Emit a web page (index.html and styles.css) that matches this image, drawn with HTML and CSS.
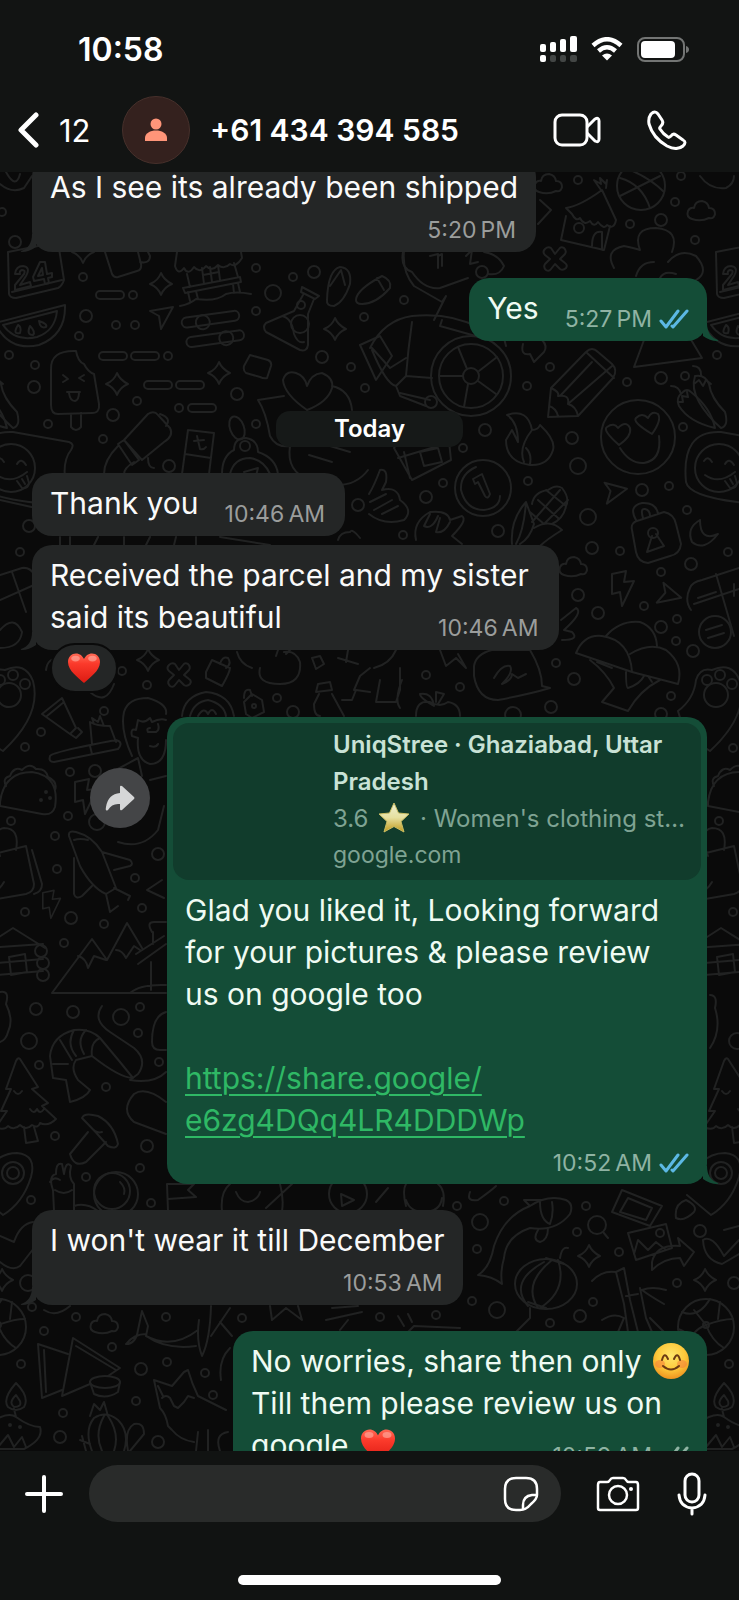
FILE: index.html
```html
<!DOCTYPE html>
<html lang="en">
<head>
<meta charset="utf-8">
<meta name="viewport" content="width=device-width, initial-scale=1">
<title>Chat</title>
<link rel="stylesheet" href="styles.css">
</head>
<body>
<svg class="defs" aria-hidden="true">
  <defs>
    <linearGradient id="heartFill" x1="0" y1="0" x2="0" y2="1"><stop offset="0" stop-color="#ff6a55"/><stop offset=".35" stop-color="#fb3a2b"/><stop offset="1" stop-color="#dc1a12"/></linearGradient>
    <linearGradient id="starFill" x1="0" y1="0" x2="0" y2="1"><stop offset="0" stop-color="#eef0d4"/><stop offset=".5" stop-color="#e6e0a0"/><stop offset="1" stop-color="#c19a1c"/></linearGradient>
    <radialGradient id="smileFill" cx=".5" cy=".35" r=".65"><stop offset="0" stop-color="#ffe66b"/><stop offset=".6" stop-color="#fdc93a"/><stop offset="1" stop-color="#ee9420"/></radialGradient>
    <symbol id="heart" viewBox="0 0 36 34"><path d="M18 33C12 27 1 20 1 10.500C1 5 5 1.500 9.500 1.500C13.500 1.500 16.500 4 18 7.500C19.500 4 22.500 1.500 26.500 1.500C31 1.500 35 5 35 10.500C35 20 24 27 18 33Z" fill="url(#heartFill)"/><ellipse cx="9" cy="7" rx="4.500" ry="3" fill="#ffb3a6" opacity=".6"/><ellipse cx="27" cy="7" rx="4.500" ry="3" fill="#ffb3a6" opacity=".6"/></symbol>
    <symbol id="ticks" viewBox="0 0 30 20"><path d="M2 12L7 18L19 2M13 17L14 18L28 2" fill="none" stroke="currentColor" stroke-width="3" stroke-linecap="round" stroke-linejoin="round"/></symbol>
    <symbol id="tail" viewBox="0 0 16 18"><path d="M0 0H4C4 9 8 15 15 17Q16 18 14 18Q7 18 0 13Z" fill="currentColor"/></symbol>

    <circle id="s" r="4"/><circle id="m" r="6"/><circle id="l" r="8"/>
    <path id="spark" d="M0 -11Q3 -4 11 0Q3 3 0 11Q-3 3 -11 0Q-3 -3 0 -11Z"/>
    <rect id="pill" x="-14" y="-4" width="28" height="8" rx="4"/>
    <path id="cross" d="M-4 -11Q-7 -13 -10 -10Q-13 -7 -10 -4L-5 0L-10 5Q-12 8 -9 11Q-6 13 -4 10L0 5L5 10Q8 12 11 9Q13 6 10 4L5 0L10 -5Q12 -8 9 -11Q6 -13 4 -10L0 -5Z"/>
    <path id="cursor" d="M-12 -8L11 -12L-1 10L-3 -3Z"/>
    <path id="cloud" d="M-9 8Q-15 6 -13 0Q-11 -4 -7 -3Q-6 -10 1 -10Q7 -9 8 -3Q14 -3 14 3Q13 8 8 7Q0 11 -9 8Z"/>
    <path id="bolt" d="M-9 -14L5 -17L3 -6L13 -7L1 18L-1 4L-9 6Z"/>
    <g id="melon"><path d="M-36 2L34 -16Q35 14 8 24Q-22 31 -36 2ZM-28 4L26 -10Q24 10 6 16Q-16 21 -28 4"/><path d="M-13 4Q-9 6 -11 12Q-19 14 -13 4ZM-1 5Q5 11 2 14Q-5 14 -1 5ZM8 0Q17 3 15 6Q9 8 8 0Z"/></g>
    <g id="tongue"><circle r="24"/><path d="M-15 -7Q-11 -13 -7 -6M6 -4Q10 -11 15 -3M-14 7Q0 17 16 4M6 13L11 20Q17 21 18 15L16 8M11 11L14 16"/><path d="M-33 14Q-38 -38 2 -36L58 -26Q64 -24 60 -18Q52 -8 54 10Q50 38 18 34Q-30 28 -33 14Z"/></g>
    <g id="paw"><circle r="12"/><circle cx="-9" cy="-15" r="5"/><circle cx="4" cy="-20" r="5"/><circle cx="16" cy="-11" r="5"/><path d="M-38 16Q-22 4 -20 -15Q-16 -28 -4 -25Q16 -34 24 -14Q33 20 -6 56Q-32 40 -38 16"/></g>
    <g id="chili"><path d="M-10 -10Q-18 -4 -14 4Q-4 20 22 26Q18 6 -2 -10Q-6 -14 -10 -10ZM-12 -8Q-14 -16 -22 -16M-15 0L-10 0L-11 -6L-5 -5L-6 -10"/><path d="M2 -26Q-2 -14 6 0Q14 14 28 26Q36 24 32 10Q18 -4 16 -18Q12 -28 2 -26ZM8 -27Q8 -36 0 -36M1 -18L6 -22L10 -16L13 -22L18 -18"/></g>
    <g id="calendar"><path d="M-26 -34L24 -44L30 -6Q28 0 24 2L-18 12Q-24 12 -25 8ZM-22 6L28 -6"/><path d="M-19 -12Q-18 -20 -11 -20Q-3 -19 -8 -10L-14 -1L-4 -4L-3 0L-19 4L-19 -1L-10 -12Q-8 -16 -12 -16Q-15 -15 -14 -12ZM6 -24L11 -24L13 -12L18 -13L18 -9L14 -8L15 -3L11 -2L10 -7L0 -5L-1 -9ZM8 -18L4 -10L9 -11Z"/></g>
    <g id="taco"><path d="M-28 12Q-24 -18 4 -18Q32 -14 27 17Q24 26 14 24L-28 16ZM-22 -4Q-26 -12 -18 -14Q-14 -24 -6 -20Q2 -28 8 -21Q18 -22 20 -13Q30 -8 27 0"/><circle cx="18" cy="2" r="1"/><circle cx="22" cy="8" r="1"/><circle cx="13" cy="10" r="1"/></g>
    <g id="cabin"><path d="M-30 -8L-2 -26L30 -6M-28 -6L28 -10M-30 10L28 5M-30 22L28 17M-6 3L10 0L12 18L-4 21Z"/><circle cx="26" cy="-3" r="6"/><circle cx="28" cy="9" r="6"/><circle cx="28" cy="21" r="6"/><circle cx="-28" cy="2" r="6"/><circle cx="-27" cy="13" r="6"/></g>
    <g id="pine"><path d="M0 -38Q-2 -40 -4 -36L-14 -8L-9 -8L-19 14L-13 14L-24 30Q-16 34 -12 29Q-6 34 0 28Q6 34 12 28Q18 32 20 26Q28 30 36 22L22 9L28 6L12 -8L18 -10ZM4 30L6 46L18 44L14 30M-6 -6Q-2 0 2 -6M10 12Q14 18 17 12Q20 18 24 12"/></g>
    <g id="pin"><circle r="6"/><circle r="11"/><path d="M-20 -10Q-10 -20 4 -20Q24 -18 18 4Q10 30 -10 42L-34 22"/></g>
    <g id="beach"><circle r="28"/><path d="M-24 -15Q-8 -8 4 -28M-18 22Q-16 4 0 -2Q16 -8 27 -8M0 -2L-12 -17M0 -2Q6 14 18 21M-28 2Q-14 6 -12 25M12 -8L14 -25"/><circle cx="0" cy="-2" r="3"/></g>
    <g id="lamp"><path d="M0 -44Q-14 -28 -8 -20Q0 -14 8 -20Q14 -30 0 -44ZM0 -32Q-8 -24 -2 -20Q6 -20 4 -26ZM-26 -4Q-8 -16 0 -10Q14 0 24 0Q28 12 8 22L-26 22M-2 -18L0 -10M-18 20L-8 8L-2 20L6 10L10 20"/><circle cx="4" cy="0" r="1"/><circle cx="-6" cy="-2" r="1"/></g>
    <g id="basket"><path d="M-30 -10L18 -22L26 16Q26 24 18 26L-28 34M24 -18L34 16Q34 24 26 26M-30 -14L-24 -24M-8 -12Q-18 -38 -4 -40Q12 -40 8 -18M-24 22Q-12 28 -4 14"/></g>
  </defs>
</svg>

<main class="phone">
  <div class="status-bar">
    <time class="clock">10:58</time>
    <div class="status-icons">
      <svg width="37" height="26" viewBox="0 0 37 26" aria-label="Signal" role="img"><g fill="#fff"><rect x="0" y="8" width="6" height="8" rx="2"/><rect x="10" y="6" width="6" height="10" rx="2"/><rect x="20" y="3" width="6" height="13" rx="2"/><rect x="30" y="0" width="7" height="16" rx="2"/><rect x="0" y="19" width="6" height="7" rx="2"/></g><g fill="#434645"><rect x="10" y="19" width="6" height="7" rx="2"/><rect x="20" y="19" width="6" height="7" rx="2"/><rect x="30" y="19" width="7" height="7" rx="2"/></g></svg>
      <svg width="32" height="24" viewBox="0 0 32 24" aria-label="Wi-Fi" role="img"><path d="M2 8.500Q16 -4 30 8.500" fill="none" stroke="#fff" stroke-width="4.500"/><path d="M7.500 14Q16 6.500 24.500 14" fill="none" stroke="#fff" stroke-width="4.500"/><path d="M11 18.500Q16 14.500 21 18.500L16 23.500Z" fill="#fff"/></svg>
      <svg width="52" height="25" viewBox="0 0 52 25" aria-label="Battery" role="img"><rect x="1" y="1" width="46" height="23" rx="7" fill="none" stroke="#737574" stroke-width="2"/><rect x="4" y="4" width="34" height="17" rx="4" fill="#fff"/><path d="M49 9Q52 10 52 12.500Q52 15 49 16Z" fill="#737574"/></svg>
    </div>
  </div>

  <header class="nav-bar">
    <button class="back" type="button" aria-label="Back, 12 unread chats">
      <svg width="21" height="38" viewBox="0 0 21 38"><path d="M18 4L3 19L18 34" fill="none" stroke="#fff" stroke-width="5" stroke-linecap="round" stroke-linejoin="round"/></svg>
      <span>12</span>
    </button>
    <span class="avatar"><svg width="22" height="24" viewBox="0 0 22 24"><circle cx="11" cy="6" r="5.500" fill="#ff9579"/><path d="M0 23V20C0 10 22 10 22 20V23Z" fill="#ff9579"/></svg></span>
    <h1 class="contact">+61 434 394 585</h1>
    <button class="icon-button" type="button" aria-label="Video call"><svg width="48" height="34" viewBox="0 0 48 34" fill="none" stroke="#fff" stroke-width="3" stroke-linejoin="round"><rect x="2" y="2" width="32" height="30" rx="7"/><path d="M34 14L42 6Q46 4 46 8V26Q46 30 42 28L34 20"/></svg></button>
    <button class="icon-button" type="button" aria-label="Voice call"><svg width="40" height="40" viewBox="0 0 40 40"><path d="M4 4Q8 0 11 4L15 10Q17 13 14 16Q12 18 13 19Q16 24 21 27Q22 28 24 26Q26 23 29 25L36 30Q40 32 36 36Q30 41 20 36Q6 28 2 14Q1 8 4 4Z" fill="none" stroke="#fff" stroke-width="3" stroke-linejoin="round"/></svg></button>
  </header>

  <section class="chat" aria-label="Messages">
    <svg class="wallpaper" aria-hidden="true">
      <g transform="translate(0 -172)">
        <!-- dots -->
        <use href="#s" x="2" y="212"/><use href="#m" x="15" y="242"/><use href="#s" x="578" y="180"/><use href="#s" x="681" y="176"/><use href="#s" x="675" y="202"/><use href="#m" x="661" y="220"/><use href="#s" x="630" y="224"/><use href="#s" x="695" y="240"/>
        <use href="#s" x="83" y="277"/><use href="#s" x="133" y="295"/><use href="#m" x="86" y="316"/><use href="#s" x="79" y="336"/><use href="#s" x="116" y="325"/><use href="#s" x="135" y="325"/><use href="#s" x="168" y="356"/><use href="#s" x="9" y="355"/><use href="#s" x="35" y="365"/><use href="#m" x="34" y="387"/><use href="#s" x="137" y="401"/><use href="#m" x="113" y="415"/><use href="#s" x="48" y="424"/><use href="#s" x="103" y="439"/><use href="#s" x="179" y="408"/><use href="#m" x="237" y="394"/><use href="#s" x="256" y="424"/><use href="#m" x="169" y="466"/><use href="#s" x="256" y="268"/><use href="#l" x="273" y="293"/><use href="#s" x="293" y="277"/><use href="#m" x="314" y="272"/><use href="#s" x="256" y="311"/><use href="#m" x="322" y="357"/><use href="#s" x="351" y="367"/><use href="#s" x="364" y="317"/><use href="#s" x="365" y="388"/>
        <use href="#s" x="404" y="300"/><use href="#s" x="550" y="367"/><use href="#s" x="527" y="386"/><use href="#s" x="627" y="382"/><use href="#m" x="661" y="378"/><use href="#s" x="685" y="376"/><use href="#s" x="717" y="355"/><use href="#m" x="485" y="430"/><use href="#m" x="572" y="438"/><use href="#s" x="683" y="427"/><use href="#s" x="463" y="448"/><use href="#l" x="578" y="466"/><use href="#s" x="528" y="481"/><use href="#m" x="642" y="490"/><use href="#s" x="669" y="486"/><use href="#s" x="443" y="483"/><use href="#m" x="426" y="497"/><use href="#l" x="588" y="517"/><use href="#m" x="498" y="531"/><use href="#s" x="403" y="535"/><use href="#m" x="592" y="548"/><use href="#s" x="620" y="551"/><use href="#s" x="687" y="510"/><use href="#s" x="728" y="552"/><use href="#m" x="29" y="526"/><use href="#s" x="20" y="552"/><use href="#m" x="358" y="505"/>
        <use href="#m" x="691" y="564"/><use href="#s" x="661" y="572"/><use href="#m" x="578" y="595"/><use href="#m" x="598" y="613"/><use href="#s" x="644" y="606"/><use href="#s" x="677" y="619"/><use href="#m" x="661" y="627"/><use href="#s" x="676" y="641"/><use href="#m" x="693" y="651"/><use href="#s" x="556" y="663"/><use href="#m" x="574" y="679"/><use href="#s" x="671" y="696"/><use href="#s" x="733" y="748"/><use href="#s" x="426" y="675"/><use href="#s" x="460" y="687"/><use href="#m" x="551" y="707"/><use href="#l" x="513" y="715"/><use href="#m" x="661" y="714"/>
        <use href="#s" x="122" y="671"/><use href="#s" x="147" y="685"/><use href="#s" x="104" y="711"/><use href="#s" x="41" y="732"/><use href="#s" x="25" y="747"/><use href="#s" x="70" y="772"/><use href="#m" x="95" y="771"/><use href="#s" x="68" y="816"/><use href="#l" x="97" y="822"/><use href="#s" x="11" y="821"/><use href="#s" x="55" y="836"/><use href="#s" x="57" y="869"/><use href="#m" x="158" y="854"/><use href="#s" x="135" y="878"/><use href="#s" x="277" y="698"/><use href="#m" x="293" y="712"/>
        <use href="#s" x="25" y="912"/><use href="#m" x="71" y="918"/><use href="#s" x="104" y="924"/><use href="#s" x="142" y="908"/><use href="#s" x="64" y="943"/><use href="#m" x="36" y="1009"/><use href="#m" x="73" y="1012"/><use href="#l" x="121" y="1017"/><use href="#s" x="140" y="1007"/><use href="#l" x="29" y="1041"/><use href="#s" x="138" y="1033"/><use href="#s" x="39" y="1065"/><use href="#s" x="106" y="1087"/><use href="#s" x="159" y="1062"/><use href="#s" x="55" y="1136"/><use href="#m" x="147" y="1146"/><use href="#s" x="140" y="1168"/><use href="#s" x="86" y="1177"/><use href="#s" x="31" y="1200"/><use href="#s" x="151" y="1203"/><use href="#s" x="719" y="821"/><use href="#s" x="733" y="912"/><use href="#l" x="737" y="1041"/>
        <use href="#s" x="457" y="1206"/><use href="#s" x="504" y="1201"/><use href="#s" x="586" y="1206"/><use href="#l" x="480" y="1222"/><use href="#s" x="577" y="1232"/><use href="#s" x="477" y="1249"/><use href="#m" x="700" y="1231"/><use href="#s" x="619" y="1252"/><use href="#s" x="677" y="1283"/><use href="#s" x="472" y="1301"/><use href="#l" x="497" y="1310"/><use href="#m" x="580" y="1316"/><use href="#s" x="550" y="1323"/><use href="#s" x="593" y="1302"/><use href="#s" x="436" y="1315"/><use href="#s" x="380" y="1317"/><use href="#s" x="729" y="1364"/><use href="#m" x="734" y="1283"/>
        <use href="#s" x="76" y="1317"/><use href="#s" x="44" y="1331"/><use href="#s" x="32" y="1307"/><use href="#s" x="166" y="1317"/><use href="#s" x="242" y="1318"/><use href="#s" x="112" y="1347"/><use href="#s" x="21" y="1364"/><use href="#m" x="141" y="1369"/><use href="#s" x="167" y="1362"/><use href="#s" x="205" y="1373"/><use href="#s" x="136" y="1401"/><use href="#s" x="213" y="1395"/><use href="#s" x="63" y="1413"/><use href="#m" x="60" y="1437"/><use href="#m" x="158" y="1442"/><use href="#l" x="28" y="1283"/>
        <!-- small shapes -->
        <use href="#spark" x="161" y="284"/><use href="#spark" x="335" y="329"/><use href="#spark" x="117" y="384"/><use href="#spark" x="219" y="373"/><use href="#spark" x="148" y="660"/><use href="#spark" x="589" y="1256"/><use href="#spark" x="705" y="1280"/><use href="#spark" x="2" y="1280"/><use href="#spark" x="83" y="252"/>
        <use href="#pill" x="110" y="295"/><use href="#pill" x="113" y="356"/><use href="#pill" x="145" y="356"/><use href="#pill" x="158" y="385"/><use href="#pill" x="190" y="385"/><use href="#pill" x="202" y="408"/>
        <use href="#cross" x="555" y="259"/><use href="#cross" x="179" y="675"/><use href="#cloud" x="701" y="211"/><use href="#cloud" x="104" y="1324"/><use href="#cloud" x="573" y="567"/><use href="#cloud" x="548" y="184"/>
        <use href="#cursor" x="162" y="319"/><use href="#cursor" transform="translate(612 495) rotate(25)"/><use href="#cursor" transform="translate(665 597) rotate(50)"/>
        <use href="#bolt" x="621" y="588"/><use href="#bolt" x="84" y="796"/><use href="#bolt" transform="translate(50 904) scale(.8)"/>
        <!-- doodles cut by both edges -->
        <use href="#calendar" x="34" y="286"/><use href="#calendar" x="742" y="286"/><use href="#melon" x="31" y="321"/><use href="#melon" x="739" y="321"/>
        <use href="#tongue" x="11" y="468"/><use href="#tongue" x="719" y="468"/><use href="#chili" x="693" y="402"/><use href="#chili" x="-15" y="402"/><use href="#paw" x="9" y="695"/><use href="#paw" x="716" y="695"/>
        <use href="#taco" x="28" y="790"/><use href="#taco" x="736" y="790"/><use href="#basket" x="8" y="868"/><use href="#basket" x="716" y="868"/><use href="#cabin" x="15" y="954"/><use href="#cabin" x="723" y="954"/><use href="#pine" x="20" y="1097"/><use href="#pine" x="728" y="1097"/><use href="#pin" x="13" y="1173"/><use href="#pin" x="721" y="1173"/><use href="#beach" x="-2" y="1327"/><use href="#beach" x="706" y="1327"/><use href="#lamp" x="16" y="1427"/><use href="#lamp" x="724" y="1427"/>
        <path d="M0 575L22 568Q30 567 34 574V640M0 600L34 585M12 572L26 612M0 630Q14 614 22 632Q20 648 0 648M0 500L36 508M0 992Q10 990 6 1004Q14 1020 8 1032Q6 1040 0 1042"/>
        <path d="M691 610Q684 600 690 588Q692 582 702 580L739 568M694 604L739 589M716 574L734 636M698 598L716 592M734 584V596"/><circle cx="715" cy="632" r="16"/><path d="M706 630L722 625M708 638L724 633M710 995Q718 995 715 1008Q722 1030 710 1048"/>
        <!-- jug, stall, flask, sandals -->
        <path d="M105 252L112 274Q114 278 118 277L137 271Q142 270 141 264L137 248M140 262Q150 264 150 256L146 248"/>
        <path d="M177 252L175 266Q178 276 184 268Q188 276 194 267Q200 274 206 266Q212 272 218 265Q224 270 230 264Q236 268 242 258L240 246M183 288L240 277L241 282L185 293ZM187 274L190 287M234 263L238 277M202 268L204 284M210 267L212 282M218 265L220 280M203 275L219 272M188 292L190 301M196 291L198 299M233 284L234 293M238 283L240 292M180 306Q190 304 196 299Q216 302 226 294Q236 291 251 294"/>
        <g transform="rotate(-8 212 323)"><rect x="182" y="314" width="58" height="10" rx="5"/><rect x="184" y="334" width="58" height="10" rx="5"/><circle cx="203" cy="321" r="7"/><circle cx="224" cy="340" r="7"/></g>
        <path d="M302 287L319 296L315 299L301 292ZM303 295L294 311L266 323Q262 327 266 332L300 350Q307 352 308 345L308 314L314 299M282 316Q292 318 294 334Q298 344 304 342"/><circle cx="300" cy="324" r="9"/><circle cx="301" cy="305" r="4"/>
        <path d="M327 300Q328 270 340 267Q352 268 350 284Q344 302 334 306Q326 306 327 300ZM330 286L341 270L345 285M356 300Q356 290 382 276Q392 280 390 288Q376 304 362 304Q356 304 356 300M377 278L384 290"/>
        <path d="M244 366L250 355L268 360Q272 362 271 366L267 378Q264 379 260 377L246 373Q243 371 244 366Z"/>
        <path d="M307 410Q284 394 283 380Q286 370 296 373Q305 376 307 386Q311 374 322 373Q334 378 332 388Q328 402 307 410ZM332 386Q350 390 352 410M284 396L258 400Q266 412 270 436Q276 448 290 446Q286 472 310 480Q350 494 368 470M309 455L332 462M330 446L350 452"/>
        <!-- ice pop -->
        <path d="M51 370Q50 350 76 351Q78 362 84 364Q88 372 94 374L99 404Q100 413 92 413L58 414Q51 414 51 405ZM71 414V427Q76 433 81 427V413M63 375L68 379L63 382M84 375L79 378L84 381M67 392H80M69 393Q70 401 75 401Q79 400 79 392"/>
        <path d="M124 440L148 414Q154 410 158 415L170 428Q174 436 164 442L142 460ZM118 444L124 440L139 460L132 465ZM118 446Q104 460 104 474M134 462Q124 468 124 474M160 414Q172 418 166 426M148 458Q148 468 154 468M188 430L214 433L209 474M188 430L182 474M185 454L211 458M197 436L200 449Q204 450 206 447M194 441L204 440"/>
        <ellipse cx="237" cy="428" rx="7" ry="12" transform="rotate(-20 237 428)"/><circle cx="245" cy="446" r="5"/><path d="M222 474Q222 456 234 450Q234 438 246 438Q258 440 258 452Q276 458 278 474M230 474Q234 458 250 458Q264 460 270 474M244 472L258 468L256 476"/>
        <path d="M360 345L380 336L392 356L376 380ZM404 251Q402 272 414 286L442 302L446 296L434 320"/>
        <!-- auto rickshaw -->
        <circle cx="471" cy="376" r="40"/><circle cx="471" cy="376" r="32"/><circle cx="471" cy="376" r="8"/><path d="M463 376H440M467 369L458 347M479 371L497 357M478 381L496 394M468 384L464 407M370 348Q384 320 412 316Q450 312 480 328L504 338L506 346M442 320L440 326L490 340M372 350Q386 384 396 386L406 376L432 378M412 322Q408 350 406 376M372 348L390 368L406 358M400 393L430 400M396 386L400 396L426 406"/><circle cx="431" cy="402" r="6"/>
        <path d="M403 252Q400 268 412 272Q424 290 440 288L468 278M430 256L438 254V268M438 256L442 254V266M466 256L472 250L470 264L478 262M484 252Q498 254 504 266Q500 276 488 274"/><circle cx="482" cy="272" r="6"/>
        <!-- hut, ball, tree -->
        <path d="M566 208Q580 206 602 190L616 220Q614 230 607 225Q604 230 598 222Q594 228 590 221Q584 226 580 218Q576 222 572 214ZM566 216L561 240L604 250L610 226M592 246Q592 230 602 232V250M601 190L594 180L601 184L600 178L606 184L607 180L606 188"/><circle cx="579" cy="228" r="5"/>
        <circle cx="641" cy="186" r="24"/><path d="M620 178Q642 184 650 208M620 196L660 176M630 170Q650 178 664 192"/>
        <path d="M614 268Q604 250 624 246Q634 248 640 250Q632 228 656 228Q680 230 672 252M668 262Q680 248 696 256Q710 272 696 280M636 276Q640 262 654 262M660 278Q664 270 676 274"/>
        <path d="M700 176Q710 190 726 188Q734 184 734 176M540 200L551 210L538 224M0 184Q12 194 24 188L32 176M6 172Q16 190 20 174"/>
        <path d="M523 344Q520 356 530 354L534 362L544 352Q548 346 542 340M644 340L634 367L702 358L690 338"/>
        <!-- pencil, faces, fire -->
        <path d="M551 388L586 352Q592 346 598 352L612 364Q618 370 613 378L578 416L548 417ZM551 388Q560 392 558 396Q570 394 568 404Q576 406 578 416M560 396L592 362M568 404L612 366M586 352L614 378M549 406Q556 408 558 416"/>
        <circle cx="638" cy="437" r="37"/><path d="M620 448Q630 464 644 463Q662 460 659 436M619 445Q602 430 607 427Q614 422 618 428Q626 420 630 428Q632 436 619 445ZM652 434Q632 422 636 418Q642 412 648 418Q652 410 658 414Q662 420 652 434Z"/>
        <path d="M507 415Q528 408 532 430Q538 430 540 425Q556 440 553 450Q548 466 530 465Q506 462 506 440L512 430L518 442Q518 422 507 415ZM532 430Q518 448 524 462M526 448Q532 454 530 464"/>
        <circle cx="483" cy="488" r="28"/><path d="M476 467Q460 474 461 490Q466 510 484 510Q500 508 500 496M473 479L482 474L490 494Q488 500 485 496L478 482L475 484Z"/>
        <path d="M394 448L400 440L448 432L451 460L412 480ZM398 458L438 446M404 452L410 478M420 452L438 448L442 462L424 466Z"/>
        <path d="M369 494Q374 486 380 470Q388 468 386 482L382 490Q398 486 400 500Q414 510 404 520Q384 526 369 514M370 502L386 494M374 510L392 500M382 514L398 506"/>
        <path d="M416 540Q412 522 430 512Q448 510 450 520L462 516Q468 520 452 536L462 544M430 514L424 526Q432 530 438 516M440 518L436 532Q444 534 450 522"/>
        <!-- corn, padlock, moon -->
        <path d="M512 544Q510 520 526 502L534 524Q530 538 520 544M526 502Q524 530 516 544M534 528Q550 518 562 530Q546 540 540 546M532 504Q534 492 548 490Q556 484 562 488Q570 498 566 506Q564 518 552 524M530 512L544 524M538 500L558 518M546 490L566 506M532 522L560 490M544 524L568 500"/>
        <path d="M632 530Q630 522 640 520L664 512Q674 514 676 524L681 544Q680 554 670 556L648 563Q638 562 636 552ZM636 520Q628 506 642 503Q656 502 658 514M643 518Q640 508 645 509Q650 510 650 516M652 536L647 552L664 546L656 534"/><circle cx="653" cy="533" r="5"/><path d="M700 520Q686 528 692 542Q704 552 718 534Q700 542 700 520"/>
        <path d="M60 537V545M70 537V545M98 537L94 545M124 537V545M150 537L146 545M176 537L174 545M196 537V545M220 537L270 545M338 540Q340 532 350 532Q352 528 360 538"/>
        <!-- umbrella mushrooms, apple -->
        <path d="M576 653Q584 634 602 636Q630 640 632 672ZM606 636Q620 620 640 622Q656 628 657 646M630 654Q650 642 666 650Q684 664 678 684L632 672M590 660Q606 672 614 688L602 702L628 711Q640 690 660 680M626 672Q626 688 628 688Q640 684 644 676M597 662L612 668M648 676L652 682"/>
        <path d="M474 666Q476 654 492 650L530 650Q542 670 542 686L550 688Q530 694 498 700Q478 700 474 676ZM494 678Q502 664 510 666Q514 672 502 684Q512 680 512 674L518 678L526 674"/>
        <path d="M416 716Q416 700 430 702Q440 708 448 702Q460 704 460 716M434 706Q420 698 420 694Q432 692 434 706ZM436 702L436 692L444 694L438 704M440 650L446 666L456 658L466 668L458 654M396 650Q390 664 374 668M380 680L376 702L396 702L400 690V668M402 680Q394 700 400 708"/>
        <path d="M561 620L576 608Q584 612 564 630L572 632Q580 640 562 640"/>
        <!-- duck, bags, toothpaste -->
        <path d="M46 670Q48 656 60 660M90 692Q106 706 114 684M237 652Q240 664 252 668M260 668Q256 684 280 684Q302 684 300 662Q296 650 284 652M276 656L278 650M286 654L290 650"/>
        <path d="M206 672L212 660L230 668Q230 672 222 686L206 678ZM220 664Q222 656 228 658Q232 664 226 668M312 658L320 656L324 664L316 669ZM338 658L358 664M348 650L346 662M244 702L252 694L262 700L264 712L252 718L246 714ZM244 698Q244 688 250 690L252 696"/>
        <path d="M316 692L318 684L330 682L332 690ZM319 694L314 704Q314 716 320 716M332 694L344 716M342 700L352 700L356 690L370 692M354 690L360 676L370 668"/>
        <path d="M42 714L62 698L76 728L70 734ZM47 716L64 702M70 734L76 738L82 732L78 728M92 744L90 722Q96 726 110 726L116 742M94 724L92 718L98 722L100 716L104 726M50 756Q52 752 116 740Q124 742 118 749L54 762Q48 762 50 756ZM90 746L92 754"/>
        <path d="M132 756Q120 730 124 712Q128 698 148 698Q168 704 166 714M136 730L138 720Q144 724 150 718L152 722Q160 718 166 720M136 730Q130 728 132 736L138 738Q136 760 150 764Q166 764 166 740M150 728Q146 728 148 732H156Q160 730 158 724M150 746Q156 748 158 744M116 770L138 758L142 776M150 780L166 776M118 842Q142 850 158 830L164 806M182 716Q184 696 206 692Q230 694 234 716M190 716Q194 702 208 700Q224 704 226 716M198 716Q204 706 208 714Q212 706 216 714"/><circle cx="254" cy="706" r="2"/>
        <!-- rocket, mountains -->
        <path d="M69 836Q68 830 76 832Q92 836 102 852L116 888L106 894Q92 888 80 866ZM74 840Q80 838 88 840M102 852L130 860Q134 864 130 866L114 870M74 858L74 894Q76 900 82 896L92 886M106 894L110 912L118 906M114 888L130 896L128 900M147 890L162 880M147 890L164 898"/>
        <path d="M52 993H166M52 993L92 939L107 960L127 923L142 948M78 956Q86 958 88 968L94 956L106 960M116 950Q122 950 126 958L134 946L140 950M136 954L164 936M138 964L166 944M152 932Q146 922 154 922H166M153 932V944M151 962V990M130 993Q140 984 166 985"/>
        <!-- prawn, mushroom, rabbit -->
        <path d="M53 1078L50 1056Q52 1036 74 1030Q90 1028 100 1038L120 1062L133 1078Q120 1078 92 1056L76 1060Q70 1068 78 1080L90 1090Q86 1098 70 1102L66 1080ZM60 1040L72 1060M74 1030Q66 1044 76 1056M86 1030Q76 1040 84 1054M100 1038Q90 1042 92 1056M53 1064H68M102 1006Q92 1020 110 1032L134 1048Q148 1060 138 1074L130 1080Q154 1084 166 1072M166 1012Q152 1016 152 1042Q152 1050 160 1050H166M166 1102Q146 1086 134 1094Q120 1110 134 1122L166 1134"/>
        <path d="M82 1118Q84 1112 98 1116Q114 1124 118 1144Q116 1150 108 1146Q96 1132 82 1118ZM88 1132L70 1154Q74 1168 86 1162L106 1142M90 1126Q96 1134 102 1132"/>
        <path d="M54 1211L53 1190Q48 1176 56 1174Q56 1162 62 1164L64 1174Q66 1160 71 1166Q68 1178 74 1184V1211M50 1182Q54 1176 60 1180M55 1190Q64 1196 72 1190M74 1206Q86 1202 98 1211"/><circle cx="116" cy="1194" r="22"/><circle cx="112" cy="1191" r="18"/><path d="M120 1182Q126 1188 124 1194"/>
        <path d="M168 1211L167 1184L194 1184L188 1190L196 1197L168 1199M222 1211Q220 1192 230 1184M282 1211Q284 1198 280 1184M236 1192Q240 1202 248 1202Q258 1200 260 1192M266 1208L292 1184"/><circle cx="348" cy="1194" r="19"/><path d="M341 1194L342 1206L354 1200Z"/>
        <path d="M376 1202L388 1188M406 1206Q402 1190 406 1184M443 1206Q446 1190 438 1184M406 1200Q410 1212 424 1212Q440 1212 442 1198M470 1192Q466 1202 478 1200Q492 1190 496 1186"/>
        <!-- koi, lantern, photos -->
        <path d="M478 1275Q490 1268 494 1246Q504 1216 530 1206Q548 1194 566 1200Q574 1204 570 1214Q556 1232 530 1228Q506 1236 504 1258Q500 1272 502 1284Q492 1276 478 1275ZM530 1206L524 1200H542M540 1202Q540 1220 550 1224Q554 1214 552 1202M538 1230Q532 1240 540 1242Q548 1240 548 1228"/>
        <ellipse cx="546" cy="1284" rx="31" ry="25"/><path d="M538 1308Q522 1284 552 1260M540 1308Q568 1290 558 1260M528 1306Q508 1282 544 1262M528 1302L546 1308M546 1258L564 1264M560 1258Q562 1246 568 1248M530 1308L530 1318L516 1332"/>
        <path d="M622 1190L662 1206L650 1226L612 1212ZM628 1198L652 1208L646 1220L620 1212ZM628 1233L666 1224L672 1248L636 1260ZM634 1254L638 1240L648 1250L656 1242L666 1250M652 1262Q656 1244 680 1246L678 1238L694 1252L684 1266L680 1258Q664 1258 652 1270Z"/><circle cx="660" cy="1233" r="4"/><circle cx="597" cy="1225" r="9"/><path d="M603 1232L608 1238M676 1218Q674 1204 686 1200Q698 1206 694 1212Q684 1222 676 1218M703 1240Q712 1234 724 1256L739 1240M703 1240Q704 1260 722 1264L739 1254M724 1230L739 1226"/>
        <path d="M592 1281Q602 1270 616 1272L624 1268L630 1300L638 1332M616 1272L624 1304L628 1332M626 1296L638 1294M642 1290Q652 1286 666 1290M642 1290Q650 1296 664 1304M640 1288L646 1318L652 1332M602 1320Q614 1312 624 1318L618 1332M664 1332L650 1318"/>
        <!-- lower left animals and food -->
        <path d="M126 1344Q136 1344 138 1330L142 1311L148 1326L146 1336Q172 1350 198 1330M126 1344Q134 1334 146 1334M146 1336Q166 1350 196 1346M199 1320Q196 1340 202 1356Q210 1340 211 1306M211 1336L230 1308M220 1322L232 1336M270 1306L272 1320L286 1308L302 1320L298 1306M326 1320L362 1312M332 1308L358 1306M348 1320L340 1330M44 1310Q56 1318 70 1306M33 1222Q20 1224 14 1242L0 1236M0 1262Q12 1272 20 1266L34 1248"/>
        <path d="M38 1344L42 1398L62 1390M38 1344L68 1354M44 1350L46 1392M73 1338L62 1396L90 1384M73 1338L120 1368L108 1376M76 1346L116 1370"/><ellipse cx="105" cy="1382" rx="15" ry="6"/><path d="M90 1382L94 1394Q106 1400 118 1392L120 1382"/>
        <path d="M154 1380L172 1386L184 1372L188 1370Q192 1384 198 1396L226 1410M154 1380L160 1408Q166 1414 168 1426L172 1430Q180 1440 194 1442M162 1398Q166 1394 170 1398L174 1406L178 1408L184 1402L188 1396L194 1398M158 1386L163 1396M198 1432L196 1451M208 1430V1451M220 1451Q214 1434 228 1432M221 1380Q218 1360 230 1348"/>
        <path d="M92 1451Q84 1430 94 1418Q106 1410 118 1420Q130 1432 124 1451M104 1416Q94 1434 102 1451M108 1416Q120 1434 114 1451M90 1416L94 1404L100 1410L104 1402L108 1416M128 1451Q124 1430 134 1424Q144 1422 144 1434L130 1451M80 1440L90 1444M82 1436L86 1451"/>
        <path d="M398 1316L404 1326M408 1314L412 1322M408 1332L414 1326L460 1328"/>
      </g>
    </svg>

    <ol class="messages">
      <li class="row row--first"><div class="bubble bubble--in bubble--tail">As I see its already been shipped<span class="meta meta--below">5:20&#8201;PM</span><svg class="tail"><use href="#tail"/></svg></div></li>
      <li class="row row--out"><div class="bubble bubble--out bubble--tail">Yes<span class="meta">5:27&#8201;PM<svg class="ticks ticks--read"><use href="#ticks"/></svg></span><svg class="tail"><use href="#tail"/></svg></div></li>
      <li class="day"><span>Today</span></li>
      <li class="row"><div class="bubble bubble--in">Thank you<span class="meta">10:46&#8201;AM</span></div></li>
      <li class="row row--grouped"><div class="bubble bubble--in bubble--tail bubble--wide">Received the parcel and my sister<br>said its beautiful<span class="meta">10:46&#8201;AM</span><svg class="tail"><use href="#tail"/></svg><span class="reaction"><svg width="34" height="32" role="img" aria-label="Red heart"><use href="#heart"/></svg></span></div></li>
      <li class="row row--out row--after-reaction">
        <button class="forward" type="button" aria-label="Forward"><svg width="30" height="27" viewBox="0 0 30 27"><path d="M15 2Q15 0 17 1L29 12Q30 13 29 14L17 25Q15 26 15 24V19Q7 18 3 25Q0 27 1 22Q3 9 15 8Z" fill="#d5d6d7"/></svg></button>
        <div class="bubble bubble--out bubble--tail bubble--link">
          <div class="preview">
            <strong>UniqStree · Ghaziabad, Uttar Pradesh</strong>
            <span class="summary">3.6 <svg class="star" viewBox="0 0 32 31" role="img" aria-label="star"><path d="M16 1L20.500 11L31 12L23 19.500L26 30L16 24.500L6 30L9 19.500L1 12L11.500 11Z" fill="url(#starFill)" stroke="#c9bd62" stroke-width="1" stroke-linejoin="round"/></svg> · Women's clothing st…</span>
            <span>google.com</span>
          </div>
          <div class="link-text">Glad you liked it, Looking forward<br>for your pictures &amp; please review<br>us on google too<br><br><a href="https://share.google/e6zg4DQq4LR4DDDWp">https://share.google/<br>e6zg4DQq4LR4DDDWp</a><span class="meta meta--below">10:52&#8201;AM<svg class="ticks ticks--read"><use href="#ticks"/></svg></span></div>
          <svg class="tail"><use href="#tail"/></svg>
        </div>
      </li>
      <li class="row"><div class="bubble bubble--in bubble--tail">I won't wear it till December<span class="meta meta--below">10:53&#8201;AM</span><svg class="tail"><use href="#tail"/></svg></div></li>
      <li class="row row--out"><div class="bubble bubble--out">No worries, share then only <svg class="emoji" viewBox="0 0 36 36" role="img" aria-label="Smiling face"><circle cx="18" cy="18" r="18" fill="url(#smileFill)"/><ellipse cx="7" cy="21" rx="5" ry="4" fill="#f47b3a" opacity=".55"/><ellipse cx="29" cy="21" rx="5" ry="4" fill="#f47b3a" opacity=".55"/><path d="M9 17Q11.500 8 15 16M21 16Q24.500 8 27 17M10 23Q18 30 26 23" fill="none" stroke="#6b3a12" stroke-width="2" stroke-linecap="round"/></svg><br>Till them please review us on<br>google <svg class="emoji" role="img" aria-label="Red heart"><use href="#heart"/></svg><span class="meta">10:59&#8201;AM<svg class="ticks"><use href="#ticks"/></svg></span></div></li>
    </ol>
  </section>

  <footer class="composer">
    <div class="composer-row">
      <button class="icon-button" type="button" aria-label="Attach"><svg width="38" height="38" viewBox="0 0 38 38"><path d="M19 2V36M2 19H36" stroke="#fff" stroke-width="4" stroke-linecap="round"/></svg></button>
      <div class="field">
        <input type="text" aria-label="Message">
        <button class="icon-button" type="button" aria-label="Stickers"><svg width="36" height="36" viewBox="0 0 36 36" fill="none" stroke="#fff" stroke-width="2.500" stroke-linejoin="round"><path d="M13 2H23Q34 2 34 13V19Q34 23 28 28Q23 34 17 34H13Q2 34 2 23V13Q2 2 13 2Z"/><path d="M34 19H29Q20 20 20 29V34"/></svg></button>
      </div>
      <button class="icon-button" type="button" aria-label="Camera"><svg width="44" height="36" viewBox="0 0 44 36" fill="none" stroke="#fff" stroke-width="2.500" stroke-linejoin="round"><path d="M4 6H11Q13 6 14 4Q15 2 17 2H27Q29 2 30 4Q31 6 33 6H40Q42 6 42 9V32Q42 34 40 34H4Q2 34 2 32V9Q2 6 4 6Z"/><circle cx="22" cy="19" r="9"/><circle cx="35" cy="13" r="2" fill="#fff" stroke="none"/></svg></button>
      <button class="icon-button" type="button" aria-label="Record voice message"><svg width="30" height="44" viewBox="0 0 30 44" fill="none" stroke="#fff" stroke-width="3" stroke-linecap="round"><rect x="8" y="2" width="14" height="28" rx="7"/><path d="M2 23Q3 35 15 36Q27 35 28 23M15 36V42"/></svg></button>
    </div>
    <div class="home-indicator"></div>
  </footer>
</main>
</body>
</html>
```

FILE: styles.css
```css
* { box-sizing: border-box; }

body {
  margin: 0;
  background: #0a0a0a;
  color: #fff;
  font-family: Inter, "Liberation Sans", sans-serif;
}

button {
  padding: 0;
  border: 0;
  background: none;
  color: inherit;
  font: inherit;
}

svg { display: block; flex: none; }

.defs { position: absolute; width: 0; height: 0; }

.phone {
  display: flex;
  flex-direction: column;
  height: 100vh;
  overflow: hidden;
}

/* Status and navigation bars */
.status-bar {
  display: flex;
  align-items: center;
  justify-content: space-between;
  height: 98px;
  padding: 0 50px 0 78px;
  background: #121413;
}

.clock { font-size: 32px; font-weight: 600; }

.status-icons { display: flex; align-items: center; gap: 14px; }

.nav-bar {
  display: flex;
  align-items: center;
  height: 74px;
  padding: 0 52px 10px 18px;
  background: #121413;
}

.back {
  display: flex;
  align-items: center;
  gap: 20px;
  width: 104px;
  font-size: 31px;
}

.avatar {
  display: flex;
  align-items: center;
  justify-content: center;
  width: 68px;
  height: 68px;
  border: 1px solid #46302b;
  border-radius: 50%;
  background: #34211e;
}

.contact {
  flex: 1;
  margin: 0 0 0 20px;
  font-size: 30px;
  font-weight: 600;
  white-space: nowrap;
}

.icon-button { display: block; flex: none; }
.icon-button + .icon-button { margin-left: 46px; }

/* Chat */
.chat {
  position: relative;
  flex: 1;
  min-height: 0;
  overflow: hidden;
}

.wallpaper {
  position: absolute;
  inset: 0;
  width: 100%;
  height: 100%;
  fill: none;
  stroke: #212222;
  stroke-width: 2;
  stroke-linejoin: round;
  stroke-linecap: round;
}

.messages {
  position: relative;
  margin: 0;
  padding: 0 32px;
  list-style: none;
}

.row { display: flex; margin-top: 26px; }
.row--first { margin-top: -15px; }
.row--grouped { margin-top: 9px; }
.row--out { justify-content: flex-end; }
.row--after-reaction { margin-top: 67px; }

.bubble {
  position: relative;
  display: flow-root;
  padding: 9px 18px 10px;
  border-radius: 20px;
  font-size: 30px;
  line-height: 42px;
  white-space: nowrap;
}

.bubble--in { background: #242626; color: #fafafa; --meta: #9b9d9c; }
.bubble--out { background: #144d37; color: #effbf3; --meta: #8fb3a3; }
.bubble--wide { width: 78%; }

.meta {
  display: flex;
  float: right;
  align-items: center;
  gap: 7px;
  margin: 20px 2px 0 26px;
  color: var(--meta);
  font-size: 23px;
  line-height: 24px;
}

.meta--below {
  float: none;
  justify-content: flex-end;
  margin-top: 10px;
}

.bubble--out .meta { margin-right: 0; }

.ticks { width: 30px; height: 20px; }
.ticks--read { color: #5cb8e4; }

.tail {
  position: absolute;
  bottom: 0;
  width: 16px;
  height: 18px;
}
.bubble--out .tail { right: -12px; color: #144d37; }
.bubble--in .tail { left: -12px; color: #242626; transform: scaleX(-1); }

.reaction {
  position: absolute;
  bottom: -43px;
  left: 18px;
  display: flex;
  align-items: center;
  justify-content: center;
  width: 68px;
  height: 50px;
  border: 2px solid #0a0a0a;
  border-radius: 25px;
  background: #242626;
}

.emoji {
  display: inline-block;
  width: 36px;
  height: 36px;
  margin-left: 3px;
  vertical-align: -7px;
}

.day {
  display: flex;
  justify-content: center;
  margin-top: 70px;
}

.day span {
  padding: 0 58px;
  border-radius: 14px;
  background: #161918;
  font-size: 24px;
  font-weight: 600;
  line-height: 36px;
}

.forward {
  display: flex;
  align-items: center;
  justify-content: center;
  width: 60px;
  height: 60px;
  margin: 51px 17px 0 0;
  border-radius: 50%;
  background: #444547;
}

.bubble--link { width: 80%; padding: 6px; }

.preview {
  display: flex;
  flex-direction: column;
  padding: 3px 12px 6px 160px;
  border-radius: 16px;
  background: #113c2c;
  color: #7fa393;
  font-size: 23px;
  line-height: 37px;
}

.preview strong {
  color: #c9e2d6;
  font-size: 24px;
  font-weight: 600;
  white-space: normal;
}

.summary { font-size: 24px; }

.star {
  display: inline-block;
  width: 32px;
  height: 31px;
  margin: 0 3px;
  vertical-align: -6px;
}

.link-text { padding: 9px 12px 3px; }

.link-text a {
  color: #2fb865;
  text-decoration-thickness: 2px;
  text-underline-offset: 5px;
}

/* Composer */
.composer {
  padding: 14px 0 15px;
  background: #111312;
}

.composer-row {
  display: flex;
  align-items: center;
  padding: 0 32px 0 25px;
}

.field {
  display: flex;
  flex: 1;
  align-items: center;
  min-width: 0;
  height: 57px;
  margin: 0 35px 0 26px;
  padding: 0 22px 0 24px;
  border-radius: 29px;
  background: #292b2a;
}

.field input {
  flex: 1;
  min-width: 0;
  border: 0;
  outline: 0;
  background: transparent;
  color: #fff;
  font: inherit;
  font-size: 30px;
}

.composer-row > .icon-button + .icon-button { margin-left: 37px; }

.home-indicator {
  width: 263px;
  height: 10px;
  margin: 53px auto 0;
  border-radius: 5px;
  background: #fff;
}
```
